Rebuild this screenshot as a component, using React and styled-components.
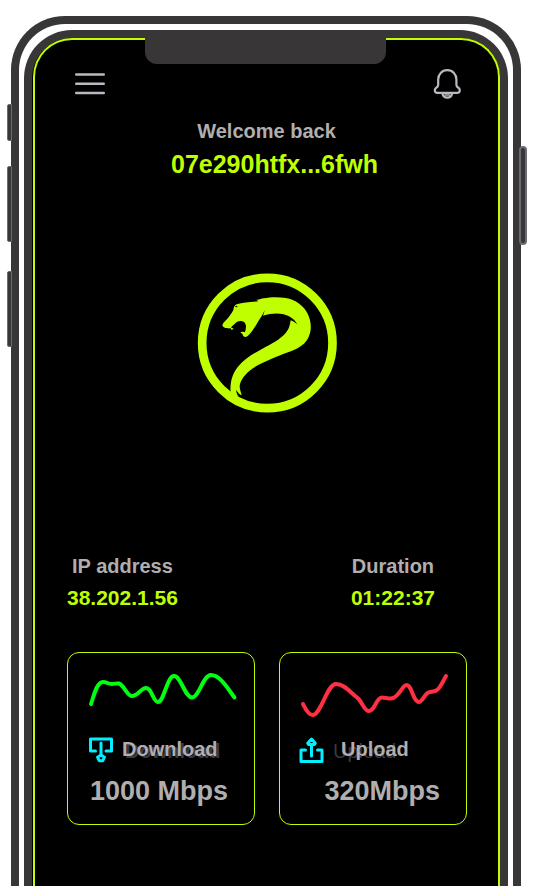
import React from "react";
import styled, { createGlobalStyle, ThemeProvider } from "styled-components";

const theme = {
  colors: {
    lime: "#bfff00",
    gray: "#b0aeae",
    frame: "#383637",
    frameEdge: "#6b6b73",
    ghost: "#3a3942",
    cyan: "#00f0ff",
    green: "#00ff11",
    red: "#ff3042",
  },
};

const GlobalStyle = createGlobalStyle`
  *, *::before, *::after {
    box-sizing: border-box;
  }
  body {
    margin: 0;
    background: #fff;
    font-family: "Liberation Sans", Arial, sans-serif;
    font-weight: 700;
  }
`;

const Page = styled.div`
  display: flex;
  min-height: 100vh;
  padding: 16px 13px 0 11px;
`;

const PhoneShell = styled.div`
  position: relative;
  display: flex;
  flex: 1;
  padding: 6px 5px 0;
  border: 8px solid ${({ theme: { colors } }) => colors.frame};
  border-bottom: 0;
  border-radius: 54px 54px 0 0;
`;

const Bezel = styled.div`
  display: flex;
  flex: 1;
  padding-left: 1px;
  background: #000;
  border: 8px solid ${({ theme: { colors } }) => colors.frame};
  border-bottom: 0;
  border-radius: 48px 48px 0 0;
`;

const Screen = styled.main`
  position: relative;
  display: flex;
  flex: 1;
  flex-direction: column;
  padding-top: 28px;
  padding-bottom: 60px;
  background: #000;
  border: 2px solid ${({ theme: { colors } }) => colors.lime};
  border-bottom: 0;
  border-radius: 39px 39px 0 0;
`;

const Notch = styled.div`
  position: absolute;
  top: -3px;
  left: 110px;
  right: 112px;
  height: 27px;
  background: ${({ theme: { colors } }) => colors.frame};
  border-radius: 0 0 12px 12px;
`;

/* hardware keys on the sides of the phone */
const SideKey = styled.span`
  position: absolute;
  top: ${({ $top }) => $top}px;
  ${({ $side }) => ($side === "left" ? "left: -12px" : "right: -14px")};
  width: ${({ $side }) => ($side === "left" ? 5 : 8)}px;
  height: ${({ $height }) => $height}px;
  background: ${({ theme: { colors } }) => colors.frame};
  border: ${({ $side }) => ($side === "left" ? 1 : 2)}px solid
    ${({ theme: { colors } }) => colors.frameEdge};
  border-radius: ${({ $side }) => ($side === "left" ? "2px 0 0 2px" : "4px")};
`;

const TopBar = styled.header`
  display: flex;
  align-items: center;
  justify-content: space-between;
  height: 32px;
  padding: 0 36px 0 39px;
`;

const IconButton = styled.button`
  display: flex;
  padding: 0;
  color: #b9b9c1;
  background: none;
  border: 0;
  cursor: pointer;
`;

const Greeting = styled.section`
  display: flex;
  flex-direction: column;
  align-items: center;
  gap: 5px;
  margin-top: 19px;
`;

const Label = styled.span`
  color: ${({ theme: { colors } }) => colors.gray};
  font-size: 20px;
  line-height: 24px;
`;

const Value = styled.span`
  color: ${({ theme: { colors } }) => colors.lime};
  font-size: ${({ $large }) => ($large ? 25 : 21)}px;
  line-height: 32px;
`;

const UserId = styled.div`
  padding-left: 16px;
`;

const LogoWrap = styled.div`
  display: flex;
  justify-content: center;
  margin-top: 93px;
`;

const Stats = styled.section`
  display: flex;
  justify-content: space-between;
  margin-top: 141px;
  padding: 0 63px 0 32px;
`;

const Stat = styled.div`
  display: flex;
  flex-direction: column;
  align-items: center;
  gap: 4px;
`;

const Cards = styled.section`
  display: grid;
  grid-template-columns: 1fr 1fr;
  gap: 24px;
  margin-top: 38px;
  padding: 0 31px 0 32px;
`;

const Card = styled.article`
  display: flex;
  flex-direction: column;
  padding: 17px 19px;
  border: 1px solid ${({ theme: { colors } }) => colors.lime};
  border-radius: 12px;
`;

const Chart = styled.svg`
  width: 100%;
  height: 48px;
  overflow: visible;
  fill: none;
  stroke: ${({ $color, theme: { colors } }) => colors[$color]};
  stroke-width: 4;
  stroke-linecap: round;
  stroke-linejoin: round;
`;

const CardTitle = styled.div`
  display: flex;
  align-items: center;
  gap: ${({ $gap }) => $gap}px;
  height: 26px;
  margin-top: 18px;
`;

const CardIcon = styled.svg`
  width: 28px;
  height: 28px;
  overflow: visible;
  fill: none;
  stroke: ${({ theme: { colors } }) => colors.cyan};
  stroke-width: 3;
  stroke-linecap: round;
  stroke-linejoin: round;
`;

const GhostLabel = styled(Label)`
  position: relative;
  z-index: 0;
  &::before {
    content: "${({ $text }) => $text}";
    position: absolute;
    top: 2px;
    left: ${({ $shift }) => $shift}px;
    z-index: -1;
    color: ${({ theme: { colors } }) => colors.ghost};
    font-weight: ${({ $thin }) => ($thin ? 400 : 700)};
  }
`;

const Rate = styled.span`
  margin-top: 13px;
  padding-right: 7px;
  color: ${({ theme: { colors } }) => colors.gray};
  font-size: 27px;
  line-height: 32px;
  text-align: right;
`;

const MenuIcon = () => (
  <svg width="32" height="32" viewBox="0 0 32 32" stroke="currentColor" strokeWidth="2.4" strokeLinecap="round">
    <path d="M2.200 6.500h27.600M2.200 15.800h27.600M2.200 25h27.600" />
  </svg>
);

const BellIcon = () => (
  <svg
    width="30"
    height="32"
    viewBox="0 0 30 32"
    fill="none"
    stroke="currentColor"
    strokeWidth="2.200"
    strokeLinejoin="round"
  >
    <path d="M15.300 2.200C9.800 2.200 6.200 6.300 6.200 11.500v5.300c0 1.300-.4 1.900-1.400 2.500-1.300.8-2 1.600-2 2.900 0 1.500 1.100 2.600 2.700 2.600h19.600c1.600 0 2.700-1.100 2.700-2.600 0-1.300-.7-2.100-2-2.900-1-.6-1.400-1.200-1.400-2.500v-5.300c0-5.200-3.600-9.300-9.100-9.300z" />
    <path d="M10.500 25.500c.5 2.800 2.400 4.200 4.800 4.200s4.300-1.400 4.800-4.200" />
    <path d="M12.500 27h5.600" strokeWidth="1.500" />
  </svg>
);

const SnakeLogo = () => (
  <svg width="140" height="140" viewBox="21 21 420 420" role="img" aria-label="Snake logo">
    <circle cx="232" cy="231" r="195.500" fill="none" stroke="#bfff00" strokeWidth="26" />
    <path
      fill="#bfff00"
      d="M97 178 C99 168 107 165 112 158 C119 150 125 142 130 132 C131 124 134 117 140 115
        C158 110 182 108 205 106 L199 101 C207 102 213 98 222 97 C240 93 264 92 287 96
        C317 101 341 119 353 143 C365 167 366 197 353 219 C340 240 318 251 294 259
        C262 271 218 288 190 306 C164 323 150 345 149 361 C149 371 153 378 155 388
        C148 385 143 379 139 372 C138 378 142 387 146 393 L122 380
        C119 349 127 323 144 302 C162 280 190 263 216 249 C244 234 272 219 287 201
        C298 188 300 176 302 163 C309 165 315 169 322 175 C314 160 299 150 281 145
        C260 140 240 143 219 149 C221 144 223 138 224 132 C219 146 211 156 204 167
        C194 184 185 200 172 211 C166 215 160 212 158 207 C160 202 164 201 166 195
        C169 184 169 172 161 167 C151 162 140 166 134 174 C129 179 124 181 122 187
        C112 188 99 186 97 178Z"
    />
    <path d="M135 122c3-4 6-3 8-1-2 3-5 3-8 1z" fill="#000" />
    <path fill="#bfff00" d="M120 183l5 9 6-4zM151 198l7-1 8 2-6 9z" />
  </svg>
);

const DownloadIcon = () => (
  <CardIcon viewBox="0 0 28 28" aria-hidden="true">
    <path d="M8.500 16H3.500V4h21v12H19" />
    <path d="M14 8v11" />
    <path d="M14 20l3.500 2.200-1.800 3.600h-3.400l-1.800-3.600z" />
  </CardIcon>
);

const UploadIcon = () => (
  <CardIcon viewBox="0 0 28 28" aria-hidden="true">
    <path d="M6.500 15H2v11.500h21V15h-4.500" />
    <path d="M12.500 21V10" />
    <path d="M12.500 4l-3.800 4.300 1 1.200h5.600l1-1.200z" />
  </CardIcon>
);

const App = () => (
  <ThemeProvider theme={theme}>
    <GlobalStyle />
    <Page>
      <PhoneShell>
        <SideKey $side="left" $top={80} $height={37} />
        <SideKey $side="left" $top={142} $height={76} />
        <SideKey $side="left" $top={247} $height={76} />
        <SideKey $side="right" $top={122} $height={99} />
        <Bezel>
          <Screen>
            <Notch />
            <TopBar>
              <IconButton type="button" aria-label="Menu">
                <MenuIcon />
              </IconButton>
              <IconButton type="button" aria-label="Notifications">
                <BellIcon />
              </IconButton>
            </TopBar>

            <Greeting>
              <Label>Welcome back</Label>
              <UserId>
                <Value $large>07e290htfx...6fwh</Value>
              </UserId>
            </Greeting>

            <LogoWrap>
              <SnakeLogo />
            </LogoWrap>

            <Stats>
              <Stat>
                <Label>IP address</Label>
                <Value>38.202.1.56</Value>
              </Stat>
              <Stat>
                <Label>Duration</Label>
                <Value>01:22:37</Value>
              </Stat>
            </Stats>

            {/* speed cards */}
            <Cards>
              <Card>
                <Chart $color="green" viewBox="0 0 148 48" aria-hidden="true">
                  <path d="M4 34C7 25 10 12 16 12C20 12 21 14 25 14C28 14 29 13 32 13.500C37 15 40 26 45 26C51 26 54 18 59 18C65 18 66 32 71 32C77 32 80 6 87 6C94 6 98 27.500 105 27.500C112 27.500 116 5 124 5C133 5 141 19 147.500 27.500" />
                </Chart>
                <CardTitle $gap={7}>
                  <DownloadIcon />
                  <GhostLabel $text="Download" $shift={3}>
                    Download
                  </GhostLabel>
                </CardTitle>
                <Rate>1000 Mbps</Rate>
              </Card>
              <Card>
                <Chart $color="red" viewBox="0 0 148 48" aria-hidden="true">
                  <path d="M4 34C6 38 9 45 13.500 45C22 45 28 14 37 14C45 14 51 22 58 27.500C63 31 65 41 70 41C76 41 77 27.500 83 27.500C86 27.500 88 28.500 92 28.500C100 28 103 15 107.500 15C113 15 114 32 120 32C124 32 126 22 131 22C134 21 136 22 138 20C142 17 144 11 147 6" />
                </Chart>
                <CardTitle $gap={14}>
                  <UploadIcon />
                  <GhostLabel $text="Upload" $shift={-8} $thin>
                    Upload
                  </GhostLabel>
                </CardTitle>
                <Rate>320Mbps</Rate>
              </Card>
            </Cards>
          </Screen>
        </Bezel>
      </PhoneShell>
    </Page>
  </ThemeProvider>
);

export default App;
